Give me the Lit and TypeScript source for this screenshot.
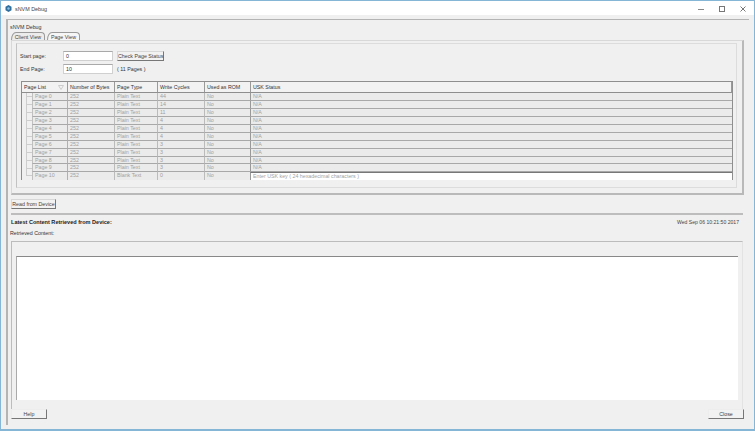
import { LitElement, html, css } from "lit";
import { customElement } from "lit/decorators.js";

const rows = [
  ["Page 0", "252", "Plain Text", "44", "No", "N/A"],
  ["Page 1", "252", "Plain Text", "14", "No", "N/A"],
  ["Page 2", "252", "Plain Text", "11", "No", "N/A"],
  ["Page 3", "252", "Plain Text", "4", "No", "N/A"],
  ["Page 4", "252", "Plain Text", "4", "No", "N/A"],
  ["Page 5", "252", "Plain Text", "4", "No", "N/A"],
  ["Page 6", "252", "Plain Text", "3", "No", "N/A"],
  ["Page 7", "252", "Plain Text", "3", "No", "N/A"],
  ["Page 8", "252", "Plain Text", "3", "No", "N/A"],
  ["Page 9", "252", "Plain Text", "3", "No", "N/A"],
  ["Page 10", "252", "Blank Text", "0", "No", "Enter USK key ( 24 hexadecimal characters )"],
];
const headers = ["Number of Bytes", "Page Type", "Write Cycles", "Used as ROM", "USK Status"];

@customElement("app-root")
export class AppRoot extends LitElement {
  static styles = css`
    :host { display: block; width: 755px; height: 431px; overflow: hidden;
      font-family: "Liberation Sans", Arial, sans-serif; font-size: 5.3px; color: #333; white-space: nowrap; }
    * { box-sizing: border-box; }
    .win { width: 755px; height: 431px; display: flex; flex-direction: column;
      border: 1px solid #86b6d6; border-bottom-width: 2px; background: #f0f0f0; }
    .title { height: 14px; flex: none; background: #fff; display: flex; align-items: center;
      padding: 1px 0 0 4px; gap: 3px; font-size: 5.4px; color: #444; }
    .title .name { flex: 1; }
    .winbtns { display: flex; gap: 15px; align-items: center; padding-right: 8px; }
    .winbtns svg { display: block; }
    .outer { flex: 1; margin: 4px 5px 4px 5px; border-left: 2px solid #b4b4b4; border-top: 1.5px solid #b4b4b4;
      padding: 3px 3px 0 3px; display: flex; flex-direction: column; min-height: 0; }
    .caption { height: 8px; line-height: 8px; margin-left: -1px; flex: none; }
    .tabs { display: flex; height: 8px; flex: none; margin-top: 1px; gap: 2px; }
    .tab { height: 8px; line-height: 8px; border: 1px solid #9a9a9a; border-bottom: 0;
      border-radius: 5px 4px 0 0 / 8px 4px 0 0; text-align: center; color: #444; }
    .tab.a { width: 34px; background: #ececec; }
    .tab.b { width: 33px; background: #f6f6f6; }
    .pane { height: 155px; flex: none; border: 1px solid #d8d8d8; border-right: 2px solid #b9b9b9;
      border-bottom: 2px solid #b9b9b9; padding: 2px 5px 5px 4px; width: 733px; }
    .inner { height: 100%; border: 1px solid #dcdcdc; border-left: 1.5px solid #c2c2c2; padding: 7px 4px 0 3px; display: flex; flex-direction: column; }
    .field { display: flex; align-items: center; height: 10px; flex: none; }
    .field + .field { margin-top: 3px; }
    .field label { width: 43px; }
    .input { width: 50px; height: 10px; line-height: 9px; background: #fff; border: 1px solid #d0d0d0; padding-left: 2px; border-top-color: #a9a9a9; }
    .btn { border: 1px solid #d8d8d8; border-right-color: #777; border-bottom-color: #777;
      background: #f2f2f2; text-align: center; height: 10px; line-height: 9px; color: #444; flex: none; }
    .check { width: 47px; margin-left: 4px; }
    .pages { margin-left: 4px; }
    .table { margin-top: 7px; margin-left: 1px; width: 712px; height: 99px; border: 1px solid #8e8e8e; border-bottom: 0;
      display: grid; grid-template-rows: 11px repeat(11, 7.94px); grid-template-columns: 46px 47px 43px 47px 46px 1fr; flex: none; }
    .th { border-right: 1px solid #9a9a9a; border-bottom: 1.5px solid #8e8e8e; background: #f2f2f2; padding-left: 2px;
      line-height: 10px; color: #333; display: flex; justify-content: space-between; align-items: center; padding-right: 3px; }
    .td { background: #ebebeb; border-bottom: 1px solid #a8a8a8; border-right: 1px solid #bbb; color: #9f9f9f;
      padding-left: 2px; line-height: 7px; overflow: hidden; }
    .td.last { border-bottom: 0; }
    .td.usk { border-left: 1px solid #999; margin-left: -1px; border-right: 0; }
    .td.blank { background: #fff; border-top: 1px solid #777; line-height: 6px; }
    .first { background: #f0f0f0; border: 0; padding: 0; display: flex; height: 100%; }
    .tree { width: 10px; flex: none; padding-left: 4px; }
    .tree i { display: block; width: 6px; height: 100%;
      background: linear-gradient(#cdcdcd, #cdcdcd) left top / 1px 100% no-repeat,
                  linear-gradient(#cdcdcd, #cdcdcd) left 50% / 100% 1px no-repeat; }
    .last .tree i { height: 50%; background: linear-gradient(#cdcdcd, #cdcdcd) left top / 1px 100% no-repeat,
                  linear-gradient(#cdcdcd, #cdcdcd) left bottom / 100% 1px no-repeat; }
    .page { flex: 1; background: #ebebeb; color: #9f9f9f; border-bottom: 1px solid #a8a8a8; border-left: 1px solid #c0c0c0; border-right: 1px solid #b0b0b0;
      padding-left: 2px; line-height: 7px; }
    .last .page { border-bottom: 0; }
    .sep { height: 1.5px; background: #bdbdbd; flex: none; width: 732px; }
    .rd { display: flex; height: 18px; align-items: center; flex: none; }
    .rd .btn { width: 45px; }
    .latest { display: flex; justify-content: space-between; align-items: center; flex: none; margin-top: 3.5px; height: 8px; line-height: 8px; width: 728px; }
    .latest b { font-weight: 700; font-size: 5.55px; color: #222; }
    .latest span { color: #444; font-size: 5.1px; }
    .ret { flex: none; margin-top: 3px; height: 8px; line-height: 8px; margin-left: -1px; }
    .box { margin-top: 4px; width: 732px; height: 168px; border-top: 1.5px solid #bcbcbc; border-left: 1.5px solid #bcbcbc; padding: 14px 4px 0 3.5px; flex: none; border-right: 1.5px solid #e3e3e3; }
    .text { height: 144px; background: #fff; border-top: 1px solid #888; border-left: 1px solid #aaa; }
    .foot { display: flex; justify-content: space-between; flex: none; width: 733px; }
    .foot .btn { width: 36px; height: 10px; border-color: #ededed; border-right-color: #777; border-bottom-color: #777; }
  `;

  render() {
    return html`<div class="win">
      <div class="title">
        <svg width="7" height="7" viewBox="0 0 7 7"><path d="M3.5 0 6.5 1.7V5.3L3.5 7 .5 5.3V1.7Z" fill="#2f6f9f"/><circle cx="3.5" cy="3.5" r="1.2" fill="#8fc0e0"/></svg>
        <span class="name">sNVM Debug</span>
        <div class="winbtns">
          <svg width="6" height="6" viewBox="0 0 6 6"><path d="M0 3.5H6" stroke="#888" fill="none"/></svg>
          <svg width="6" height="6" viewBox="0 0 6 6"><rect x=".5" y=".5" width="5" height="5" stroke="#777" fill="none"/></svg>
          <svg width="6" height="6" viewBox="0 0 6 6"><path d="M.5.5 5.5 5.5M5.5.5.5 5.5" stroke="#777" fill="none"/></svg>
        </div>
      </div>
      <div class="outer">
        <div class="caption">sNVM Debug</div>
        <div class="tabs"><div class="tab a">Client View</div><div class="tab b">Page View</div></div>
        <div class="pane">
          <div class="inner">
            <div class="field"><label>Start page:</label><div class="input">0</div><div class="btn check">Check Page Status</div></div>
            <div class="field"><label>End Page:</label><div class="input">10</div><span class="pages">( 11 Pages )</span></div>
            <div class="table">
              <div class="th"><span>Page List</span><svg width="6" height="5" viewBox="0 0 6 5"><path d="M.5.5H5.5L3 4.5Z" fill="none" stroke="#ccc"/></svg></div>
              ${headers.map((h) => html`<div class="th">${h}</div>`)}
              ${rows.map((r, i) => {
                const last = i === rows.length - 1 ? "last" : "";
                return html`<div class="first ${last}"><div class="tree"><i></i></div><div class="page">${r[0]}</div></div>
                ${r.slice(1, 5).map((c) => html`<div class="td ${last}">${c}</div>`)}
                <div class="td usk ${last} ${last ? "blank" : ""}">${r[5]}</div>`;
              })}
            </div>
          </div>
        </div>
        <div class="rd"><div class="btn">Read from Device</div></div>
        <div class="sep"></div>
        <div class="latest"><b>Latest Content Retrieved from Device:</b><span>Wed Sep 06 10:21:50 2017</span></div>
        <div class="ret">Retrieved Content:</div>
        <div class="box"><div class="text"></div></div>
        <div class="foot"><div class="btn">Help</div><div class="btn">Close</div></div>
      </div>
    </div>`;
  }
}
